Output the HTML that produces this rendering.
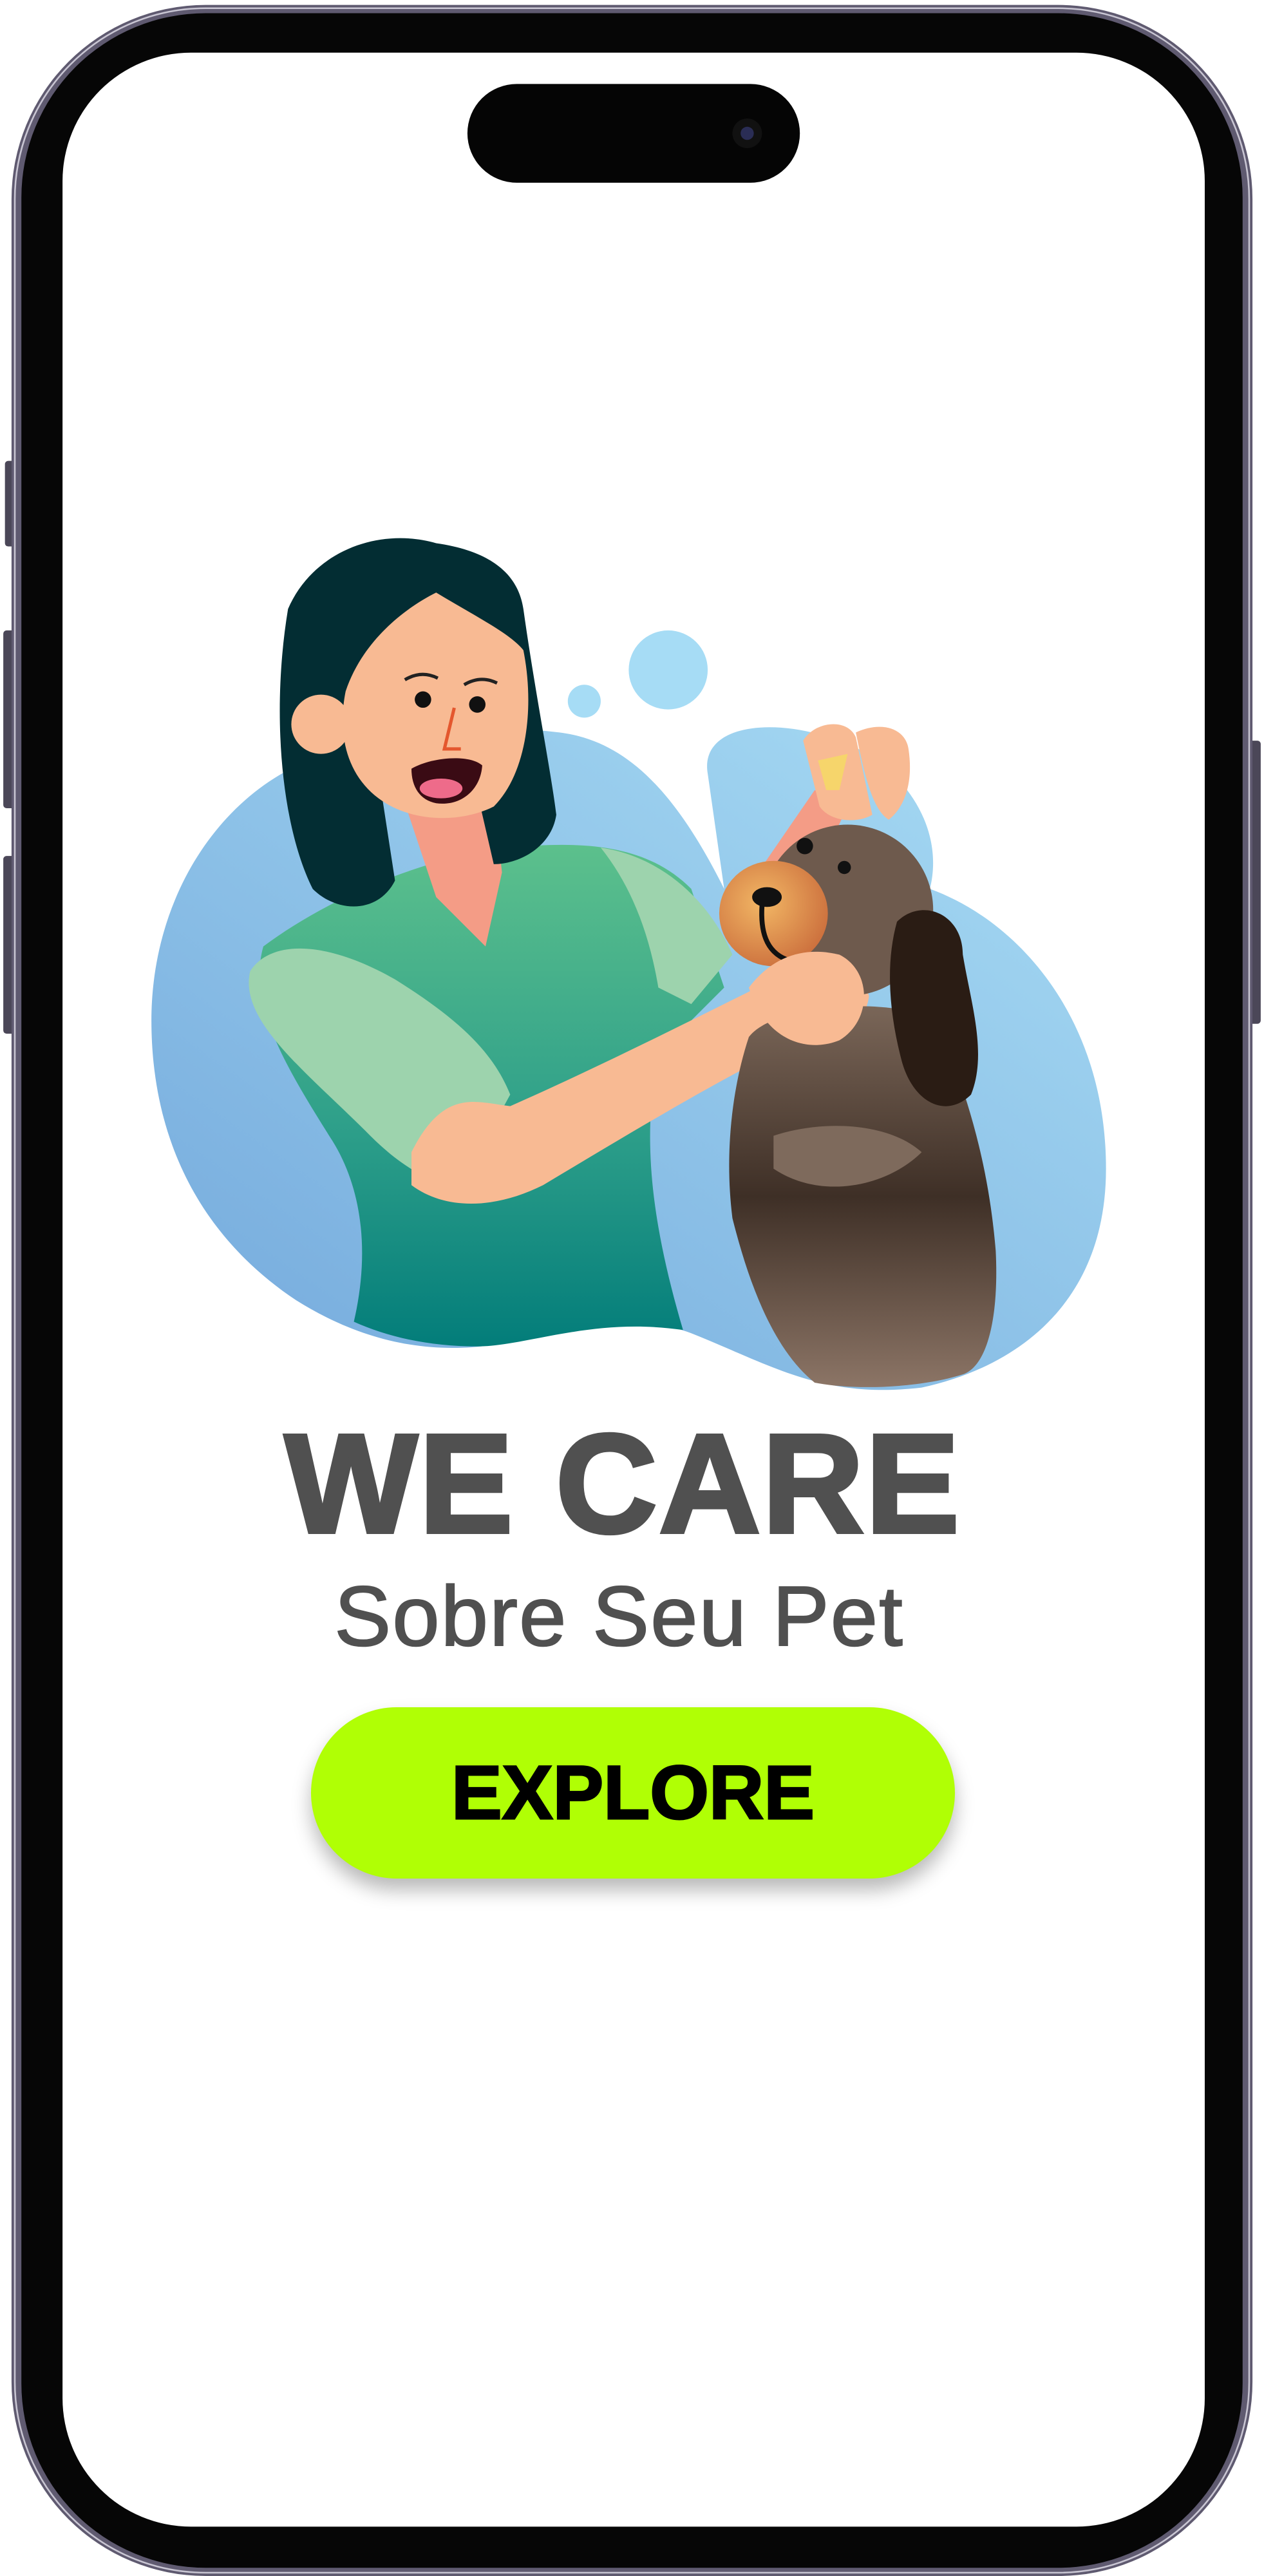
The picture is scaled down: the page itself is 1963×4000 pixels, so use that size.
<!DOCTYPE html>
<html><head><meta charset="utf-8">
<style>
html,body{margin:0;padding:0;background:#fff;}
body{width:1963px;height:4000px;position:relative;overflow:hidden;font-family:"Liberation Sans",sans-serif;}
svg.bg{position:absolute;left:0;top:0;width:1963px;height:4000px;}
.t1{position:absolute;left:-14px;width:1963px;top:2190px;text-align:center;font-weight:bold;font-size:218px;color:#505050;letter-spacing:3px;line-height:230px;-webkit-text-stroke:6px #505050;}
.t2{position:absolute;left:-20px;width:1963px;top:2440px;text-align:center;font-size:132px;color:#505050;letter-spacing:2px;line-height:140px;-webkit-text-stroke:2px #505050;}
.btn{position:absolute;left:483px;top:2651px;width:1000px;height:266px;border-radius:133px;background:#b0ff05;box-shadow:0 18px 30px rgba(0,0,0,0.28);text-align:center;line-height:266px;font-weight:bold;font-size:118px;color:#000;letter-spacing:0px;-webkit-text-stroke:3px #000;}
</style></head><body>
<svg class="bg" viewBox="0 0 768 1565" preserveAspectRatio="none" xmlns="http://www.w3.org/2000/svg">
<defs>
<linearGradient id="blue" x1="0" y1="1" x2="1" y2="0"><stop offset="0" stop-color="#74a9dc"/><stop offset="1" stop-color="#a8dcf4"/></linearGradient>
<linearGradient id="shirt" x1="0" y1="0" x2="0" y2="1"><stop offset="0" stop-color="#5cc08c"/><stop offset="0.55" stop-color="#2fa08a"/><stop offset="1" stop-color="#037d7a"/></linearGradient>
<linearGradient id="dog" x1="0" y1="0" x2="0" y2="1"><stop offset="0" stop-color="#7a6658"/><stop offset="0.5" stop-color="#3e2f26"/><stop offset="1" stop-color="#8c7566"/></linearGradient>
<radialGradient id="muz" cx="0.4" cy="0.4" r="0.7"><stop offset="0" stop-color="#f2b765"/><stop offset="1" stop-color="#c96a3a"/></radialGradient>
</defs>
<rect x="3" y="280" width="6" height="52" rx="2" fill="#4b4758"/>
<rect x="2" y="383" width="7" height="108" rx="2" fill="#4b4758"/>
<rect x="2" y="520" width="7" height="108" rx="2" fill="#4b4758"/>
<rect x="759" y="450" width="7" height="172" rx="2" fill="#4b4758"/>
<rect x="7" y="3" width="754" height="1562" rx="118" fill="#5f5a70"/>
<rect x="9" y="5" width="750" height="1558" rx="116" fill="none" stroke="#c9c6d3" stroke-width="1"/>
<rect x="13" y="8" width="742" height="1552" rx="112" fill="#060606"/>
<rect x="38" y="32" width="694" height="1503" rx="78" fill="#ffffff"/>
<rect x="284" y="51" width="202" height="60" rx="30" fill="#050505"/>
<circle cx="454" cy="81" r="9" fill="#111"/>
<circle cx="454" cy="81" r="4" fill="#2a2d55"/>
<path d="M92 620 C92 540 140 470 210 455 C260 445 300 440 340 445 C380 450 410 480 440 540 L430 470 C425 440 470 435 510 450 C545 462 575 500 565 540 C620 560 672 620 672 710 C672 790 620 830 560 843 C500 850 470 830 420 810 C380 795 340 810 300 817 C260 823 220 815 180 790 C120 750 92 690 92 620 Z" fill="url(#blue)"/>
<circle cx="406" cy="407" r="24" fill="#a6dcf5"/>
<circle cx="355" cy="426" r="10" fill="#a6dcf5"/>
<path d="M160 575 C200 545 260 520 310 515 C360 510 395 515 420 540 L440 600 L400 640 C390 690 395 740 415 808 C360 800 320 818 290 818 C260 818 235 812 215 803 C225 760 220 720 200 690 C175 650 150 610 160 575 Z" fill="url(#shirt)"/>
<path d="M152 590 C165 570 200 572 240 595 C280 620 300 640 310 665 L280 720 C260 720 240 705 225 690 C185 650 145 620 152 590 Z" fill="#9dd3ad"/>
<path d="M365 515 C400 520 430 545 445 580 L420 610 L400 600 C395 570 385 540 365 515 Z" fill="#9dd3ad"/>
<path d="M245 485 L300 485 L305 530 L295 575 L265 545 Z" fill="#f49c86"/>
<path d="M250 700 C270 660 290 670 310 672 C360 650 420 620 470 595 C490 575 520 580 528 605 C525 630 495 640 470 640 C430 660 380 690 330 720 C300 735 270 735 250 720 Z" fill="#f8ba93"/>
<path d="M440 560 L495 480 L515 490 L470 585 Z" fill="#f49c86"/>
<path d="M175 370 C190 335 230 320 265 330 C300 335 315 350 318 370 C325 420 335 470 338 495 C335 515 315 525 300 525 L285 460 L230 470 L240 535 C230 555 205 555 190 540 C170 500 165 430 175 370 Z" fill="#032d33"/>
<path d="M210 420 C220 390 245 370 265 360 C290 375 310 385 318 395 C325 430 320 470 300 490 C280 500 250 500 230 485 C210 470 205 445 210 420 Z" fill="#f8ba93"/>
<circle cx="195" cy="440" r="18" fill="#f8ba93"/>
<circle cx="257" cy="425" r="5" fill="#111"/>
<circle cx="290" cy="428" r="5" fill="#111"/>
<path d="M246 413 Q256 407 266 412 M282 416 Q292 410 302 415" stroke="#222" stroke-width="2" fill="none"/>
<path d="M276 430 L270 455 L280 455" stroke="#e4572e" stroke-width="2" fill="none"/>
<path d="M250 467 C262 460 285 458 293 465 C292 480 280 490 265 488 C255 486 250 478 250 467 Z" fill="#3a0b14"/>
<ellipse cx="268" cy="479" rx="13" ry="6" fill="#ee6b8a"/>
<path d="M488 450 C495 438 515 436 520 448 L530 495 C522 500 505 500 498 490 Z" fill="#f8ba93"/>
<path d="M520 445 C535 438 550 442 552 455 C555 475 550 490 540 498 C530 492 525 470 520 445 Z" fill="#f8ba93"/>
<path d="M497 462 L515 458 L510 480 L502 480 Z" fill="#f6d56b"/>
<path d="M455 630 C470 610 540 605 570 620 C585 660 600 700 605 760 C607 800 600 830 585 835 C560 843 520 845 495 840 C470 820 455 780 445 740 C440 700 445 660 455 630 Z" fill="url(#dog)"/>
<path d="M470 690 C500 680 540 682 560 700 C540 720 500 730 470 710 Z" fill="#7e6a5c"/>
<ellipse cx="515" cy="553" rx="52" ry="52" fill="#6e5a4d"/>
<path d="M545 560 C560 545 585 555 585 580 C590 610 600 640 590 665 C575 680 555 670 548 645 C540 615 538 585 545 560 Z" fill="#2a1c14"/>
<ellipse cx="470" cy="555" rx="33" ry="32" fill="url(#muz)"/>
<ellipse cx="466" cy="545" rx="9" ry="6" fill="#111"/>
<path d="M463 550 C462 565 465 578 478 583" stroke="#111" stroke-width="3" fill="none"/>
<circle cx="489" cy="514" r="5" fill="#111"/>
<circle cx="513" cy="527" r="4" fill="#111"/>
<path d="M455 600 C470 580 490 575 510 580 C530 590 530 620 510 632 C490 640 465 632 455 600 Z" fill="#f8ba93"/>
</svg>
<div class="t1">WE CARE</div>
<div class="t2">Sobre Seu Pet</div>
<div class="btn">EXPLORE</div>
</body></html>
